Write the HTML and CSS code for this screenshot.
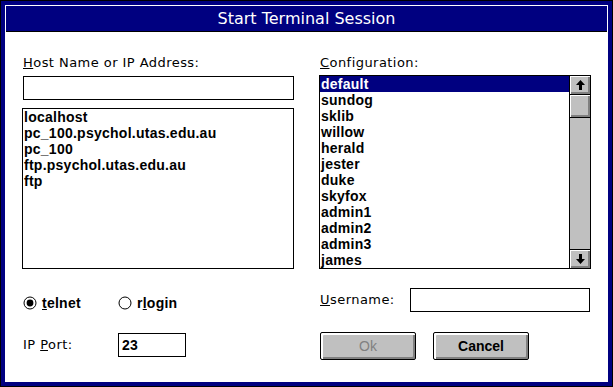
FILE: index.html
```html
<!DOCTYPE html>
<html lang="en">
<head>
    <meta charset="UTF-8">
    <title>Start Terminal Session</title>
    <link rel="stylesheet" href="styles.css">
</head>
<body>
    <div class="window">
        <div class="frame">
            <div class="titlebar">Start Terminal Session</div>

            <div class="content">
                <div class="col">
                    <div class="field-label"><u>H</u>ost Name or IP Address:</div>
                    <div class="textbox host-box"></div>
                    <ul class="listbox host-list">
                        <li>localhost</li>
                        <li>pc_100.psychol.utas.edu.au</li>
                        <li>pc_100</li>
                        <li>ftp.psychol.utas.edu.au</li>
                        <li>ftp</li>
                    </ul>

                    <div class="radios">
                        <div class="radio">
                            <svg width="14" height="14" viewBox="0 0 14 14">
                                <circle cx="7" cy="7" r="6" fill="#fff" stroke="#000" stroke-width="1"/>
                                <circle cx="7" cy="7" r="3.4" fill="#000"/>
                            </svg>
                            <span><u>t</u>elnet</span>
                        </div>
                        <div class="radio">
                            <svg width="14" height="14" viewBox="0 0 14 14">
                                <circle cx="7" cy="7" r="6" fill="#fff" stroke="#000" stroke-width="1"/>
                            </svg>
                            <span>r<u>l</u>ogin</span>
                        </div>
                    </div>

                    <div class="port-row">
                        <span class="port-label">IP <u>P</u>ort:</span>
                        <div class="textbox port-box">23</div>
                    </div>
                </div>

                <div class="col">
                    <div class="field-label"><u>C</u>onfiguration:</div>
                    <div class="listbox config-list">
                        <ul class="config-items">
                            <li class="selected">default</li>
                            <li>sundog</li>
                            <li>sklib</li>
                            <li>willow</li>
                            <li>herald</li>
                            <li>jester</li>
                            <li>duke</li>
                            <li>skyfox</li>
                            <li>admin1</li>
                            <li>admin2</li>
                            <li>admin3</li>
                            <li>james</li>
                        </ul>
                        <div class="scrollbar">
                            <div class="sb-button">
                                <svg width="11" height="12" viewBox="0 0 11 12">
                                    <path d="M5.5 1 L10 6 L7 6 L7 11 L4 11 L4 6 L1 6 Z" fill="#000"/>
                                </svg>
                            </div>
                            <div class="sb-thumb"></div>
                            <div class="sb-track"></div>
                            <div class="sb-button sb-down">
                                <svg width="11" height="12" viewBox="0 0 11 12">
                                    <path d="M5.5 11 L10 6 L7 6 L7 1 L4 1 L4 6 L1 6 Z" fill="#000"/>
                                </svg>
                            </div>
                        </div>
                    </div>

                    <div class="user-row">
                        <span class="user-label"><u>U</u>sername:</span>
                        <div class="textbox user-box"></div>
                    </div>

                    <div class="buttons">
                        <button class="btn" disabled>Ok</button>
                        <button class="btn">Cancel</button>
                    </div>
                </div>
            </div>
        </div>
    </div>
</body>
</html>
```

FILE: styles.css
```css
html, body {
    margin: 0;
    padding: 0;
    background-color: #000;
}
body {
    width: 613px;
    height: 387px;
    font-family: "DejaVu Sans", Arial, sans-serif;
    font-size: 13px;
    letter-spacing: 0.45px;
    line-height: 16px;
    color: #000;
}
.window {
    box-sizing: border-box;
    width: 613px;
    height: 387px;
    border: 1px solid #000;
    padding: 4px;
    background-color: #000080;
}
.frame {
    box-sizing: border-box;
    height: 100%;
    background-color: #fff;
    padding: 1px 1px 0 1px;
}
.titlebar {
    height: 25px;
    line-height: 25px;
    background-color: #000080;
    color: #fff;
    border-bottom: 1px solid #000;
    text-align: center;
    font-size: 16px;
    letter-spacing: 0;
}
.content {
    display: flex;
    gap: 25px;
    padding-left: 16px;
}
.col {
    width: 272px;
    display: flex;
    flex-direction: column;
}
.field-label {
    margin: 23px 0 0 1px;
}
.textbox {
    box-sizing: border-box;
    height: 24px;
    border: 1px solid #000;
    background-color: #fff;
    padding: 3px 0 0 3px;
    font-family: "Liberation Sans", Arial, sans-serif;
    font-size: 14px;
    letter-spacing: 0.25px;
    font-weight: bold;
}
.host-box {
    margin: 5px 0 0 1px;
    width: 271px;
}
.listbox {
    box-sizing: border-box;
    border: 1px solid #000;
    background-color: #fff;
    margin: 0;
    padding: 0;
    list-style: none;
    font-family: "Liberation Sans", Arial, sans-serif;
    font-size: 14px;
    letter-spacing: 0.25px;
    font-weight: bold;
}
.listbox li {
    height: 16px;
    padding-left: 1px;
}
.host-list {
    margin-top: 8px;
    height: 161px;
}
.radios {
    display: flex;
    margin-top: 26px;
    height: 16px;
    align-items: center;
    font-family: "Liberation Sans", Arial, sans-serif;
    font-size: 14px;
    letter-spacing: 0.25px;
    font-weight: bold;
}
.radio {
    display: flex;
    align-items: center;
    gap: 5px;
}
.radio:first-child {
    margin-left: 1px;
    width: 95px;
}
.radio svg {
    display: block;
}
.port-row {
    display: flex;
    align-items: center;
    margin-top: 22px;
}
.port-label {
    width: 95px;
    margin-left: 1px;
}
.port-box {
    width: 68px;
}
.config-list {
    margin-top: 4px;
    height: 194px;
    display: flex;
}
.config-items {
    flex: 1;
    margin: 0;
    padding: 0;
    list-style: none;
}
.config-items li.selected {
    background-color: #000080;
    color: #fff;
}
.scrollbar {
    width: 20px;
    border-left: 1px solid #000;
    display: flex;
    flex-direction: column;
    background-color: #c0c0c0;
}
.sb-button {
    box-sizing: border-box;
    height: 19px;
    border-bottom: 1px solid #000;
    background-color: #c0c0c0;
    box-shadow: inset 1px 1px #fff, inset -2px -2px #808080;
    display: flex;
    align-items: center;
    justify-content: center;
}
.sb-down {
    border-bottom: none;
    border-top: 1px solid #000;
}
.sb-thumb {
    box-sizing: border-box;
    height: 23px;
    border-bottom: 1px solid #000;
    background-color: #c0c0c0;
    box-shadow: inset 1px 1px #fff, inset -2px -2px #808080;
}
.sb-track {
    flex: 1;
}
.user-row {
    display: flex;
    align-items: center;
    margin-top: 19px;
}
.user-label {
    width: 90px;
    margin-left: 1px;
}
.user-box {
    width: 180px;
}
.buttons {
    display: flex;
    gap: 17px;
    margin-top: 20px;
    margin-left: 1px;
}
.btn {
    box-sizing: border-box;
    width: 96px;
    height: 28px;
    border: 1px solid #000;
    border-radius: 2px;
    background-color: #c0c0c0;
    box-shadow: inset 2px 2px #fff, inset -2px -2px #808080;
    font-family: "Liberation Sans", Arial, sans-serif;
    font-size: 14px;
    font-weight: bold;
    color: #000;
    padding: 0;
}
.btn:disabled {
    color: #808080;
    font-weight: normal;
}
```
